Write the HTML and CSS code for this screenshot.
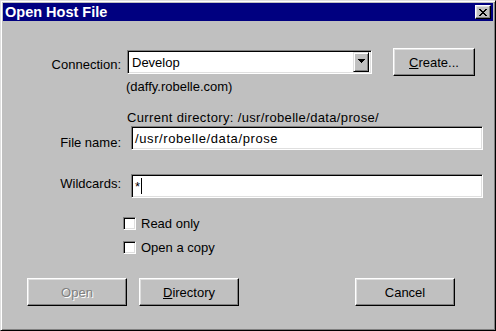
FILE: index.html
```html
<!DOCTYPE html>
<html lang="en">
<head>
  <meta charset="UTF-8" />
  <title>Open Host File</title>
  <link rel="stylesheet" href="styles.css">
</head>
<body>
  <div class="window">
    <div class="titlebar">
      <span class="title">Open Host File</span>
      <button class="close-btn" aria-label="Close">
        <svg width="8" height="7" viewBox="0 0 8 7" shape-rendering="crispEdges">
          <path fill="#000" d="M0 0h2v1H0zM6 0h2v1H6zM1 1h2v1H1zM5 1h2v1H5zM2 2h4v1H2zM3 3h2v1H3zM2 4h4v1H2zM1 5h2v1H1zM5 5h2v1H5zM0 6h2v1H0zM6 6h2v1H6z"/>
        </svg>
      </button>
    </div>

    <div class="dialog-body">
      <!-- Connection -->
      <div class="row row-connection">
        <label class="field-label">Connection:</label>
        <div class="combo">
          <span class="combo-value">Develop</span>
          <span class="combo-arrow">
            <svg width="7" height="4" viewBox="0 0 7 4" shape-rendering="crispEdges">
              <path fill="#000" d="M0 0h7v1H0zM1 1h5v1H1zM2 2h3v1H2zM3 3h1v1H3z"/>
            </svg>
          </span>
        </div>
        <button class="btn btn-create"><u>C</u>reate...</button>
      </div>
      <div class="host-name">(daffy.robelle.com)</div>

      <div class="current-dir">Current directory: /usr/robelle/data/prose/</div>
      <div class="row row-filename">
        <label class="field-label">File name:</label>
        <div class="textbox path-text">/usr/robelle/data/prose</div>
      </div>

      <div class="row row-wildcards">
        <label class="field-label">Wildcards:</label>
        <div class="textbox">*<span class="caret"></span></div>
      </div>

      <!-- Options -->
      <div class="checks">
        <label class="check"><span class="check-box"></span>Read only</label>
        <label class="check"><span class="check-box"></span>Open a copy</label>
      </div>

      <div class="button-row">
        <button class="btn btn-disabled" disabled>Open</button>
        <button class="btn"><u>D</u>irectory</button>
        <button class="btn btn-cancel">Cancel</button>
      </div>
    </div>
  </div>
</body>
</html>
```

FILE: styles.css
```css
* {
  box-sizing: border-box;
}

body {
  margin: 0;
  font-family: "Liberation Sans", Arial, sans-serif;
  font-size: 13px;
  line-height: 15px;
  color: #000;
  background-color: #c0c0c0;
}

.window {
  width: 496px;
  height: 331px;
  padding: 2px;
  background-color: #c0c0c0;
  border: 1px solid;
  border-color: #dfdfdf #000 #000 #dfdfdf;
  box-shadow: inset 1px 1px #fff, inset -1px -1px #808080;
}

.titlebar {
  height: 18px;
  display: flex;
  align-items: center;
  justify-content: space-between;
  padding: 0 2px 0 2px;
  background-color: #000080;
  color: #fff;
}

.title {
  font-weight: bold;
  font-size: 14.5px;
  line-height: 18px;
}

.close-btn {
  width: 16px;
  height: 14px;
  padding: 0;
  display: flex;
  align-items: center;
  justify-content: center;
  background-color: #c0c0c0;
  border: 1px solid;
  border-color: #fff #000 #000 #fff;
  box-shadow: inset -1px -1px #808080, inset 1px 1px #dfdfdf;
}

.close-btn svg {
  display: block;
}

.dialog-body {
  display: flex;
  flex-direction: column;
  align-items: flex-start;
}

.row {
  display: flex;
  align-items: flex-start;
}

.field-label {
  width: 118px;
  flex: none;
  text-align: right;
}

/* sunken controls */
.combo,
.textbox,
.check-box {
  background-color: #fff;
  border: 1px solid;
  border-color: #808080 #fff #fff #808080;
  box-shadow: inset 1px 1px #000, inset -1px -1px #dfdfdf;
}

.row-connection {
  margin-top: 27px;
}

.row-connection .field-label {
  margin-top: 9px;
}

.combo {
  width: 245px;
  height: 24px;
  margin: 2px 0 0 6px;
  padding: 2px 2px 2px 4px;
  display: flex;
  align-items: center;
  justify-content: space-between;
}

.combo-arrow {
  width: 16px;
  height: 20px;
  display: flex;
  align-items: center;
  justify-content: center;
  padding-bottom: 3px;
  background-color: #c0c0c0;
  border: 1px solid;
  border-color: #dfdfdf #000 #000 #dfdfdf;
  box-shadow: inset 1px 1px #fff, inset -1px -1px #808080;
}

.combo-arrow svg {
  display: block;
}

.btn {
  width: 100px;
  height: 28px;
  padding: 0;
  font: inherit;
  color: #000;
  background-color: #c0c0c0;
  border: 1px solid;
  border-color: #fff #000 #000 #fff;
  box-shadow: inset -1px -1px #808080, inset 1px 1px #dfdfdf;
}

.btn-create {
  width: 82px;
  margin-left: 21px;
}

.btn-disabled {
  color: #808080;
  text-shadow: 1px 1px #fff;
}

.btn-cancel {
  margin-left: 104px;
}

.host-name {
  margin: 3px 0 0 123px;
}

.current-dir {
  margin: 16px 0 0 124px;
  letter-spacing: 0.35px;
}

.row-filename {
  margin-top: 1px;
}

.row-filename .field-label {
  margin-top: 9px;
}

.textbox {
  width: 352px;
  height: 24px;
  margin-left: 10px;
  padding: 0 3px;
  display: flex;
  align-items: center;
}

.path-text {
  letter-spacing: 0.6px;
}

.caret {
  width: 1px;
  height: 16px;
  margin-left: 1px;
  background-color: #000;
}

.row-wildcards {
  margin-top: 24px;
}

.row-wildcards .field-label {
  margin-top: 2px;
}

.checks {
  margin: 18px 0 0 120px;
  display: flex;
  flex-direction: column;
  gap: 9px;
}

.check {
  display: flex;
  align-items: center;
  gap: 5px;
}

.check-box {
  width: 13px;
  height: 13px;
}

.button-row {
  margin: 23px 0 0 24px;
  display: flex;
  gap: 12px;
}
```
